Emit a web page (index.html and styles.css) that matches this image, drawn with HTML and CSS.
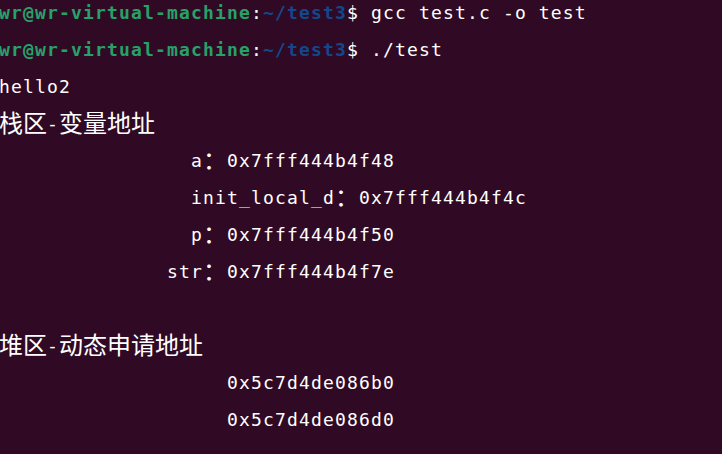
FILE: index.html
```html
<!DOCTYPE html>
<html lang="zh-CN">
<head>
<meta charset="utf-8">
<title>Terminal</title>
<link rel="stylesheet" href="styles.css">
</head>
<body>
<div class="term">
<div class="line"><span class="user">wr@wr-virtual-machine</span>:<span class="path">~/test3</span>$ gcc test.c -o test</div>
<div class="line"><span class="user">wr@wr-virtual-machine</span>:<span class="path">~/test3</span>$ ./test</div>
<div class="line">hello2</div>
<div class="line"><span class="cjk">栈区</span>-<span class="cjk">变量地址</span></div>
<div class="line">                a<span class="cjk">：</span>0x7fff444b4f48</div>
<div class="line">                init_local_d<span class="cjk">：</span>0x7fff444b4f4c</div>
<div class="line">                p<span class="cjk">：</span>0x7fff444b4f50</div>
<div class="line">              str<span class="cjk">：</span>0x7fff444b4f7e</div>
<div class="line"></div>
<div class="line"><span class="cjk">堆区</span>-<span class="cjk">动态申请地址</span></div>
<div class="line">                   0x5c7d4de086b0</div>
<div class="line">                   0x5c7d4de086d0</div>
</div>
</body>
</html>
```

FILE: styles.css
```css
html, body {
  margin: 0;
  padding: 0;
  background: #300a24;
  overflow: hidden;
}

.term {
  margin: -6px 0 0 -1px;
  color: #ffffff;
  font-family: "DejaVu Sans Mono", monospace;
  font-size: 18px;
  letter-spacing: 1.16px;
}

.line {
  height: 37px;
  line-height: 37px;
  white-space: pre;
}

.user {
  color: #26a269;
  font-weight: bold;
}

.path {
  color: #12488b;
  font-weight: bold;
}

.cjk {
  font-family: "Noto Sans CJK SC", sans-serif;
  font-size: 24px;
  line-height: 1;
  letter-spacing: 0;
  vertical-align: -2px;
}
```
